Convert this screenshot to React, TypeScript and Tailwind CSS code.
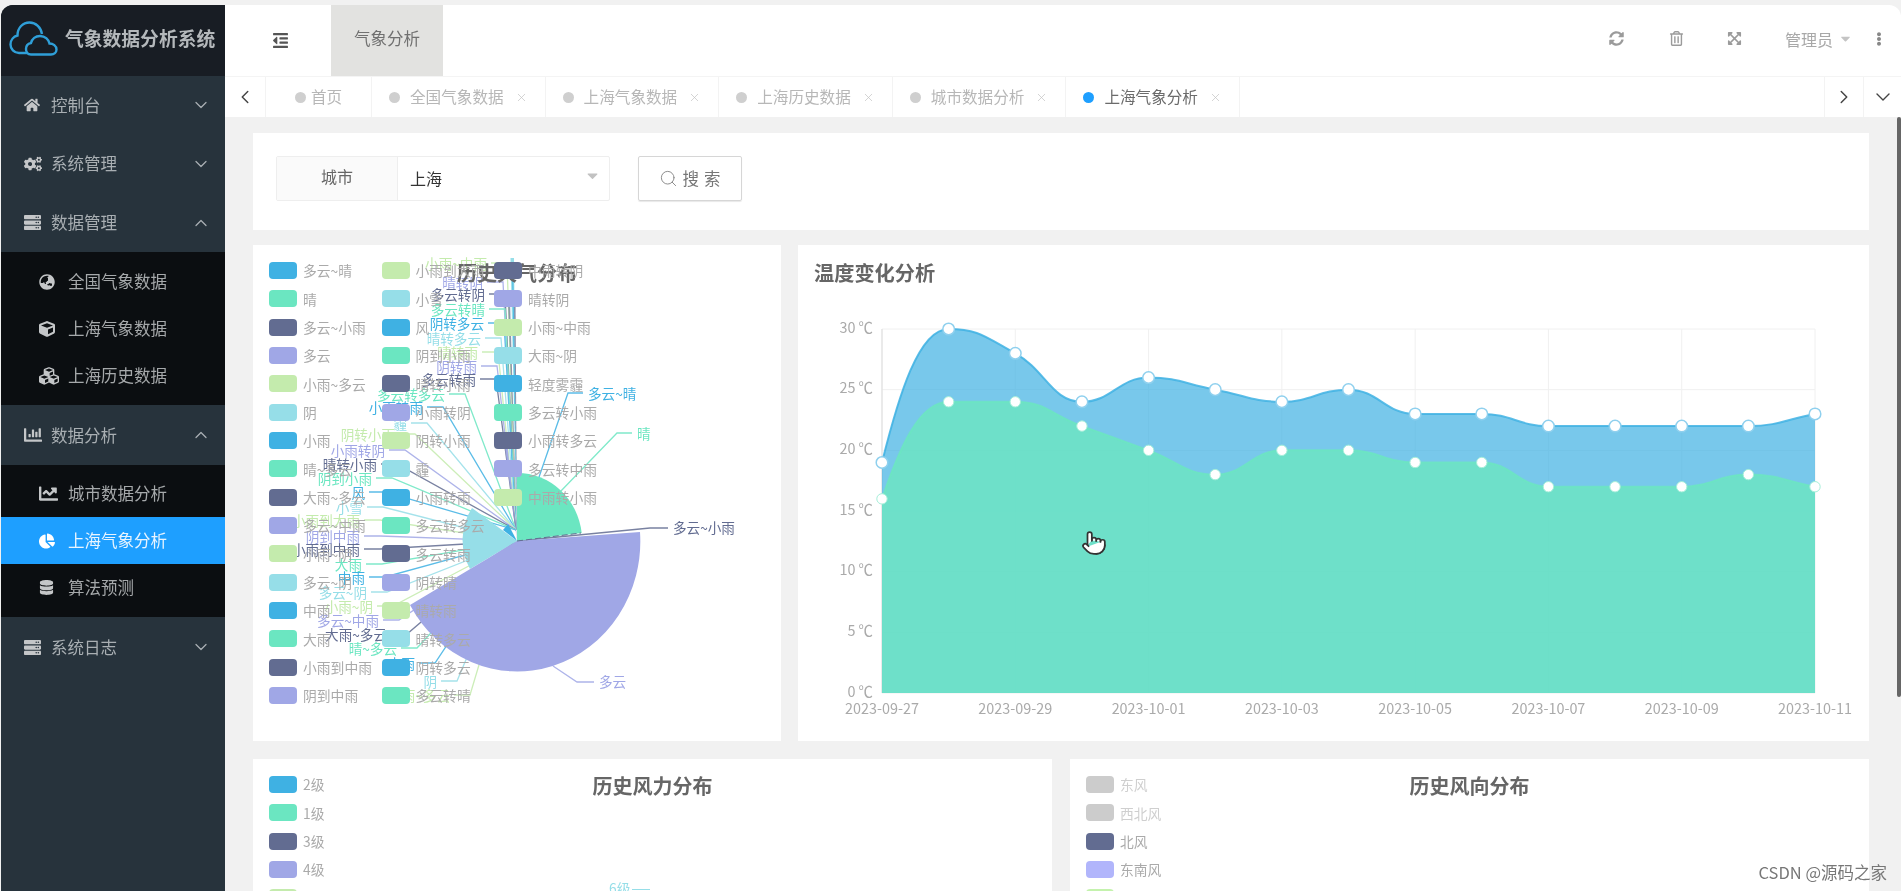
import { ChevronDown, ChevronLeft, ChevronRight, ChevronUp, Pointer, Search, X } from "lucide-react";
import type { ReactNode } from "react";
import {
  FaCaretDown,
  FaChartBar,
  FaChartLine,
  FaChartPie,
  FaCogs,
  FaCube,
  FaCubes,
  FaDatabase,
  FaEllipsisV,
  FaExpandArrowsAlt,
  FaGlobeAsia,
  FaHome,
  FaOutdent,
  FaRegTrashAlt,
  FaServer,
  FaSyncAlt,
} from "react-icons/fa";

const PALETTE = ["#3fb1e3", "#6be6c1", "#626c91", "#a0a7e6", "#c4ebad", "#96dee8"];

const WEATHER_LEGEND = [
  "多云~晴", "晴", "多云~小雨", "多云", "小雨~多云", "阴", "小雨", "晴~多云",
  "大雨~多云", "多云~中雨", "小雨~阴", "多云~阴", "中雨", "大雨", "小雨到中雨", "阴到中雨",
  "小雨到大雨", "小雪", "风", "阴到小雨", "晴转小雨", "小雨转阴", "阴转小雨", "霾",
  "小雨转雨", "多云转多云", "多云转雨", "阴转晴", "晴转雨", "晴转多云", "阴转多云", "多云转晴",
  "中雨转阴", "晴转阴", "小雨~中雨", "大雨~阴", "轻度雾霾", "多云转小雨", "小雨转多云", "多云转中雨", "中雨转小雨",
];

// right edge + baseline centre of the labels stacked on the left of the pie
const LEFT_LABELS: [string, number, number, string][] = [
  ["小雨~中雨", 487, 263, "#c4ebad"],
  ["晴转阴", 483, 282, "#a0a7e6"],
  ["多云转阴", 485, 294, "#626c91"],
  ["多云转晴", 485, 309, "#6be6c1"],
  ["阴转多云", 484, 323, "#3fb1e3"],
  ["晴转多云", 481, 338, "#96dee8"],
  ["晴转雨", 478, 352, "#c4ebad"],
  ["阴转雨", 477, 366, "#a0a7e6"],
  ["多云转雨", 476, 379, "#626c91"],
  ["多云转多云", 445, 394, "#6be6c1"],
  ["小雨转雨", 423, 407, "#3fb1e3"],
  ["霾", 407, 423, "#96dee8"],
  ["阴转小雨", 395, 434, "#c4ebad"],
  ["小雨转阴", 385, 450, "#a0a7e6"],
  ["晴转小雨", 377, 464, "#626c91"],
  ["阴到小雨", 372, 478, "#6be6c1"],
  ["风", 365, 492, "#3fb1e3"],
  ["小雪", 363, 507, "#96dee8"],
  ["小雨到大雨", 360, 520, "#c4ebad"],
  ["阴到中雨", 360, 536, "#a0a7e6"],
  ["小雨到中雨", 360, 549, "#626c91"],
  ["大雨", 362, 564, "#6be6c1"],
  ["中雨", 365, 577, "#3fb1e3"],
  ["多云~阴", 367, 592, "#96dee8"],
  ["小雨~阴", 373, 606, "#c4ebad"],
  ["多云~中雨", 379, 620, "#a0a7e6"],
  ["大雨~多云", 387, 634, "#626c91"],
  ["晴~多云", 397, 648, "#6be6c1"],
  ["小雨", 415, 663, "#3fb1e3"],
  ["阴", 437, 681, "#96dee8"],
  ["小雨~多云", 450, 695, "#c4ebad"],
];

const HIGH = [19, 30, 28, 24, 26, 25, 24, 25, 23, 23, 22, 22, 22, 22, 23];
const LOW = [16, 24, 24, 22, 20, 18, 20, 20, 19, 19, 17, 17, 17, 18, 17];

const PLOT = { left: 882, right: 1815, top: 329, bottom: 693 };
const px = (i: number) => PLOT.left + (i * (PLOT.right - PLOT.left)) / 14;
const py = (v: number) => PLOT.bottom - (v * (PLOT.bottom - PLOT.top)) / 30;

const between = (v: number, a: number, b: number) => Math.max(Math.min(v, Math.max(a, b)), Math.min(a, b));

// bezier smoothing like echarts smooth: true, control points kept inside each segment
function smoothLine(values: number[]) {
  const pts = values.map((v, i) => [px(i), py(v)]);
  const before: number[][] = [];
  const after: number[][] = [];
  pts.forEach((p, i) => {
    const prev = pts[i - 1];
    const next = pts[i + 1];
    if (!prev) {
      after[i] = [p[0] + (next[0] - p[0]) * 0.25, p[1] + (next[1] - p[1]) * 0.5];
      return;
    }
    if (!next) {
      before[i] = [p[0] - (p[0] - prev[0]) * 0.4, p[1] - (p[1] - prev[1]) * 0.4];
      return;
    }
    const a = Math.hypot(p[0] - prev[0], p[1] - prev[1]);
    const b = Math.hypot(next[0] - p[0], next[1] - p[1]);
    const r = b / (a + b);
    const ax = between(p[0] + (next[0] - prev[0]) * 0.5 * r, next[0], p[0]);
    const ay = between(p[1] + (next[1] - prev[1]) * 0.5 * r, next[1], p[1]);
    const slope = (ay - p[1]) / (ax - p[0]);
    // handles stay under half a segment so peaks do not flatten out
    const reach = (next[0] - p[0]) * 0.45;
    const rawBy = p[1] - slope * reach;
    const by = between(rawBy, prev[1], p[1]);
    const slope2 = (p[1] - by) / reach;
    before[i] = [p[0] - reach, by];
    after[i] = [p[0] + reach, between(p[1] + slope2 * reach, next[1], p[1])];
  });
  let d = `M${pts[0][0]} ${pts[0][1]}`;
  for (let i = 1; i < pts.length; i++) {
    d += ` C${after[i - 1][0]} ${after[i - 1][1]} ${before[i][0]} ${before[i][1]} ${pts[i][0]} ${pts[i][1]}`;
  }
  return d;
}

function CloudLogo() {
  return (
    <svg width="50" height="35" viewBox="0 0 50 35" fill="none" stroke="#2f9fd8" strokeWidth="2.4" className="shrink-0">
      <path d="M19 32H10C5 32 1.5 28 1.5 23.5C1.5 19 4.5 15.5 8.5 14.5C8.5 6.5 14 1.5 20.5 1.5C27 1.5 32 6.5 33 13" />
      <path d="M22 33.5C18.5 33.5 17 30.5 17 28C17 24.5 19.5 22.5 22 22C23 18 26.5 15 31 15C36 15 39.5 18.5 40.5 22.5C44 22.5 47.5 25 47.5 28.5C47.5 31.5 45 33.5 42 33.5Z" />
    </svg>
  );
}

function MenuGroup({ icon, label, open, h = "h-[59px]" }: { icon: ReactNode; label: string; open?: boolean; h?: string }) {
  return (
    <div className={`${h} flex items-center pl-[23px] pr-[14px] text-[#a9afb3]`}>
      <span className="w-[27px] text-[#c4c6c8]">{icon}</span>
      <span className="text-[16.5px]">{label}</span>
      <span className="ml-auto">
        {open ? <ChevronUp size={20} strokeWidth={1.5} /> : <ChevronDown size={20} strokeWidth={1.5} />}
      </span>
    </div>
  );
}

function SubItem({ icon, label, active }: { icon: ReactNode; label: string; active?: boolean }) {
  return (
    <div className={`h-[47px] flex items-center pl-[38px] ${active ? "bg-[#1e9fff] text-[#e8f4ff]" : "text-[#a6a9ab]"}`}>
      <span className={`w-[29px] ${active ? "text-white" : "text-[#c4c6c8]"}`}>{icon}</span>
      <span className="text-[16.5px]">{label}</span>
    </div>
  );
}

function Sidebar() {
  return (
    <aside className="w-[224px] shrink-0 bg-[#27333c] rounded-tl-xl overflow-hidden">
      <div className="h-[71px] bg-[#181d24] flex items-center pl-2 gap-1.5 pb-1">
        <CloudLogo />
        <span className="text-[18.8px] font-bold text-[#b4b8bb] whitespace-nowrap">气象数据分析系统</span>
      </div>
      <MenuGroup icon={<FaHome size={16} />} label="控制台" h="h-[58px]" />
      <MenuGroup icon={<FaCogs size={18} />} label="系统管理" />
      <MenuGroup icon={<FaServer size={17} />} label="数据管理" open />
      <div className="bg-[#0b0e11] pt-[6px] pb-[6px]">
        <SubItem icon={<FaGlobeAsia size={16} />} label="全国气象数据" />
        <SubItem icon={<FaCube size={16} />} label="上海气象数据" />
        <SubItem icon={<FaCubes size={20} />} label="上海历史数据" />
      </div>
      <MenuGroup icon={<FaChartBar size={18} />} label="数据分析" open h="h-[60px]" />
      <div className="bg-[#0b0e11] pt-[5px] pb-[6px]">
        <SubItem icon={<FaChartLine size={19} />} label="城市数据分析" />
        <SubItem icon={<FaChartPie size={16} />} label="上海气象分析" active />
        <SubItem icon={<FaDatabase size={15} />} label="算法预测" />
      </div>
      <MenuGroup icon={<FaServer size={17} />} label="系统日志" h="h-[60px]" />
    </aside>
  );
}

function TopBar() {
  return (
    <header className="h-[71px] bg-white rounded-tr-xl flex items-stretch">
      <div className="w-[106px] flex items-center justify-center pl-1 text-[#555]">
        <FaOutdent size={17} />
      </div>
      <div className="w-[112px] bg-[#e2e2e0] flex items-center justify-center pb-1 text-[16.5px] text-[#707070]">气象分析</div>
      <div className="ml-auto flex items-center text-[#9b9b9b] pb-1">
        <FaSyncAlt size={15} className="mr-[45px]" />
        <FaRegTrashAlt size={15} className="mr-[43px]" />
        <FaExpandArrowsAlt size={15} className="mr-[43px]" />
        <span className="text-[16px] text-[#a8a8a8]">管理员</span>
        <FaCaretDown size={15} className="ml-[5px] mr-[19px] text-[#c4c4c4]" />
        <FaEllipsisV size={14} className="mr-[15px] text-[#888]" />
      </div>
    </header>
  );
}

function Tab({ label, active, closable = true, wide = true }: { label: string; active?: boolean; closable?: boolean; wide?: boolean }) {
  return (
    <div className={`${wide ? "w-[173.6px]" : "w-[106px]"} border-r border-[#f3f3f3] flex items-center justify-center text-[15.6px] ${active ? "text-[#6b6b6b]" : "text-[#b7b7b7]"}`}>
      <span className={`w-[11px] h-[11px] rounded-full ${closable ? "mr-[10px]" : "mr-[5px]"} ${active ? "bg-[#1e9fff]" : "bg-[#cfcfcf]"}`} />
      {label}
      {closable && <X size={13} strokeWidth={1.3} className="ml-[11px] text-[#c2c2c2]" />}
    </div>
  );
}

function TabBar() {
  return (
    <div className="h-[41px] shrink-0 bg-white border-t border-[#f4f4f4] flex items-stretch">
      <div className="w-[41px] border-r border-[#f3f3f3] flex items-center justify-center text-[#444]">
        <ChevronLeft size={22} strokeWidth={1.6} />
      </div>
      <Tab label="首页" closable={false} wide={false} />
      <Tab label="全国气象数据" />
      <Tab label="上海气象数据" />
      <Tab label="上海历史数据" />
      <Tab label="城市数据分析" />
      <Tab label="上海气象分析" active />
      <div className="ml-auto w-[39px] border-l border-[#f3f3f3] flex items-center justify-center text-[#444]">
        <ChevronRight size={22} strokeWidth={1.6} />
      </div>
      <div className="w-[38px] border-l border-[#f3f3f3] flex items-center justify-center text-[#444]">
        <ChevronDown size={24} strokeWidth={1.4} />
      </div>
    </div>
  );
}

function SearchCard() {
  return (
    <div className="h-[97px] shrink-0 bg-white flex items-center pl-[23px] pb-[7px]">
      <div className="w-[334px] h-[45px] border border-[#eeeeee] rounded-[2px] flex items-stretch">
        <div className="w-[121px] bg-[#fafafa] border-r border-[#eeeeee] flex items-center justify-center pb-1 text-[16px] text-[#666]">城市</div>
        <div className="flex-1 flex items-center pl-[12px] text-[16px] text-[#333]">
          上海
          <FaCaretDown size={17} className="ml-auto mr-[8px] mb-1.5 text-[#c2c2c2]" />
        </div>
      </div>
      <div className="ml-[28px] w-[104px] h-[45px] border border-[#d6d6d6] rounded-[2px] shadow-[0_1px_1px_#e8e8e8] flex items-center justify-center gap-[5px] pl-[4px] text-[16.5px] tracking-[5px] text-[#777]">
        <Search size={19} strokeWidth={1.2} className="text-[#888]" />
        搜索
      </div>
    </div>
  );
}

function Legend({ items, colors, dimmed = [] }: { items: string[]; colors: string[]; dimmed?: number[] }) {
  return (
    <div className="absolute left-[16px] top-[17px] grid grid-flow-col grid-rows-[repeat(16,17px)] auto-cols-[112.5px] gap-y-[11.35px]">
      {items.map((name, i) => (
        <div key={name} className="flex items-center gap-[6px] text-[13.8px] whitespace-nowrap">
          <span
            className="w-[28px] h-[17px] rounded-[4px] shrink-0"
            style={{ backgroundColor: dimmed.includes(i) ? "#cccccc" : colors[i % colors.length] }}
          />
          <span className={dimmed.includes(i) ? "text-[#cfcfcf]" : "text-[#aaaaaa]"}>{name}</span>
        </div>
      ))}
    </div>
  );
}

function WeatherPie() {
  return (
    <div className="relative w-[528px] shrink-0 bg-white overflow-hidden">
      <svg viewBox="253 245 528 496" className="absolute inset-0 w-full h-full" fontSize="13.6">
        <g fill="none" strokeWidth="1.3" opacity="0.85">
          {LEFT_LABELS.map(([name, x, y, c]) => (
            <polyline key={name} stroke={c} points={`${x + 4},${y} ${x + 20},${y} 516,${y < 500 ? 530 : 541}`} />
          ))}
          <polyline stroke="#3fb1e3" points="583,393 568,393 538,480" />
          <polyline stroke="#6be6c1" points="632,433 617,433 560,492" />
          <polyline stroke="#626c91" points="668,528 650,528 517,541" />
          <polyline stroke="#a0a7e6" points="594,682 577,682 553,666" />
        </g>

        {/* thin slices that run up to the top of the card */}
        <polygon points="510.5,258 514,258 517,541" fill="#96dee8" />
        <polygon points="512,262 513,262 517,541" fill="#3fb1e3" />
        <polygon points="508,300 510,300 517,541" fill="#626c91" opacity="0.7" />
        <polygon points="514,300 515.5,300 517,541" fill="#626c91" opacity="0.8" />
        <polygon points="504,440 507,440 517,541" fill="#a0a7e6" opacity="0.8" />

        <path d="M517 541 L517 473 A64.7 68 0 0 1 581.7 533 Z" fill="#6be6c1" />
        <path d="M517 541 L470 569 A54 57 0 0 1 472 508 Z" fill="#96dee8" />
        <path d="M517 541 L503 530 L508 524 Z" fill="#3fb1e3" />
        <path d="M517 541 L640 532 A123 130 0 0 1 410 605 Z" fill="#a0a7e6" />
        <line x1="517" y1="541" x2="581" y2="533" stroke="#626c91" strokeDasharray="6 3" />

        {LEFT_LABELS.map(([name, x, y, c]) => (
          <text key={name} x={x} y={y} fill={c} textAnchor="end" dominantBaseline="central">
            {name}
          </text>
        ))}
        <text x="588" y="393" fill="#3fb1e3" dominantBaseline="central">多云~晴</text>
        <text x="637" y="433" fill="#6be6c1" dominantBaseline="central">晴</text>
        <text x="673" y="527" fill="#626c91" dominantBaseline="central">多云~小雨</text>
        <text x="599" y="681" fill="#a0a7e6" dominantBaseline="central">多云</text>
      </svg>
      <div className="absolute top-[16px] inset-x-0 text-center text-[20px] font-bold leading-[24px] text-[#666]">历史天气分布</div>
      <Legend items={WEATHER_LEGEND} colors={PALETTE} />
    </div>
  );
}

function TempChart() {
  const hi = smoothLine(HIGH);
  const lo = smoothLine(LOW);
  const close = `L${PLOT.right} ${PLOT.bottom} L${PLOT.left} ${PLOT.bottom} Z`;
  const dates = ["2023-09-27", "2023-09-29", "2023-10-01", "2023-10-03", "2023-10-05", "2023-10-07", "2023-10-09", "2023-10-11"];

  return (
    <div className="relative flex-1 bg-white overflow-hidden">
      <svg viewBox="798 245 1071 496" className="absolute inset-0 w-full h-full" fontSize="14.4" fill="#aaaaaa">
        {[0, 1, 2, 3, 4, 5, 6].map((i) => (
          <g key={i}>
            <line x1={PLOT.left} x2={PLOT.right} y1={py(i * 5)} y2={py(i * 5)} stroke="#f0f0f0" />
            <text x="873" y={py(i * 5) - 3} textAnchor="end" dominantBaseline="central">{`${i * 5} ℃`}</text>
          </g>
        ))}
        {dates.map((d, i) => (
          <g key={d}>
            <line x1={px(i * 2)} x2={px(i * 2)} y1={PLOT.top} y2={PLOT.bottom} stroke="#f0f0f0" />
            <text x={px(i * 2)} y="707" textAnchor="middle" dominantBaseline="central">{d}</text>
          </g>
        ))}
        <line x1={PLOT.left} x2={PLOT.left} y1={PLOT.top} y2={PLOT.bottom} stroke="#dddddd" />

        <path d={`${hi} ${close}`} fill="#3fb1e3" fillOpacity="0.7" />
        <path d={hi} fill="none" stroke="#3fb1e3" strokeWidth="2" opacity="0.85" />
        <path d={`${lo} ${close}`} fill="#6be6c1" fillOpacity="0.8" />
        <path d={lo} fill="none" stroke="#6be6c1" strokeWidth="2" opacity="0.8" />

        {HIGH.map((v, i) => (
          <circle key={i} cx={px(i)} cy={py(v)} r="5.8" fill="#ffffff" stroke="#8fd0ee" strokeWidth="1.5" />
        ))}
        {LOW.map((v, i) => (
          <circle key={i} cx={px(i)} cy={py(v)} r="5.2" fill="#ffffff" stroke="#a5efd9" strokeWidth="1" />
        ))}
      </svg>
      <div className="absolute left-[16px] top-[16px] text-[20.2px] font-bold leading-[24px] text-[#666]">温度变化分析</div>
      <Pointer size={26} strokeWidth={1.6} fill="#ffffff" className="absolute left-[283px] top-[285px] text-[#333]" />
    </div>
  );
}

function DistributionCard({ title, items, colors, dimmed, extra }: { title: string; items: string[]; colors: string[]; dimmed?: number[]; extra?: ReactNode }) {
  return (
    <div className="relative h-[200px] bg-white overflow-hidden">
      <div className="pt-[15px] text-center text-[20px] font-bold leading-[24px] text-[#666]">{title}</div>
      <Legend items={items} colors={colors} dimmed={dimmed} />
      {extra}
    </div>
  );
}

export default function App() {
  return (
    <div className="relative w-[1901px] h-[891px] overflow-hidden bg-[#f1f1f1] flex pt-[5px] pl-px font-['Noto_Sans_CJK_SC','Noto_Sans',sans-serif] blur-[0.6px]">
      <Sidebar />
      <main className="flex-1 min-w-0 flex flex-col">
        <TopBar />
        <TabBar />
        <div className="flex-1 min-h-0 overflow-hidden pl-[28px] pr-[32px] pt-[16px] flex flex-col">
          <SearchCard />
          <div className="h-[496px] mt-[15px] flex gap-[17px] shrink-0">
            <WeatherPie />
            <TempChart />
          </div>
          <div className="mt-[18px] grid grid-cols-2 gap-[18px] shrink-0">
            <DistributionCard
              title="历史风力分布"
              items={["2级", "1级", "3级", "4级", "5级"]}
              colors={PALETTE}
              extra={
                <>
                  <span className="absolute left-[356px] top-[119px] text-[13.8px] text-[#96dee8]">6级</span>
                  <span className="absolute left-[379px] top-[130px] w-[18px] h-px bg-[#96dee8]" />
                </>
              }
            />
            <DistributionCard
              title="历史风向分布"
              items={["东风", "西北风", "北风", "东南风", "东北风"]}
              colors={["#cccccc", "#cccccc", "#626c91", "#b1b5fb", "#c4f2ad"]}
              dimmed={[0, 1]}
            />
          </div>
        </div>
      </main>
      <div className="absolute right-0 top-[117px] w-[4px] h-[580px] rounded-full bg-[#666]" />
      <span className="absolute right-[14px] top-[860px] text-[16.5px] text-[#777]">CSDN @源码之家</span>
    </div>
  );
}
